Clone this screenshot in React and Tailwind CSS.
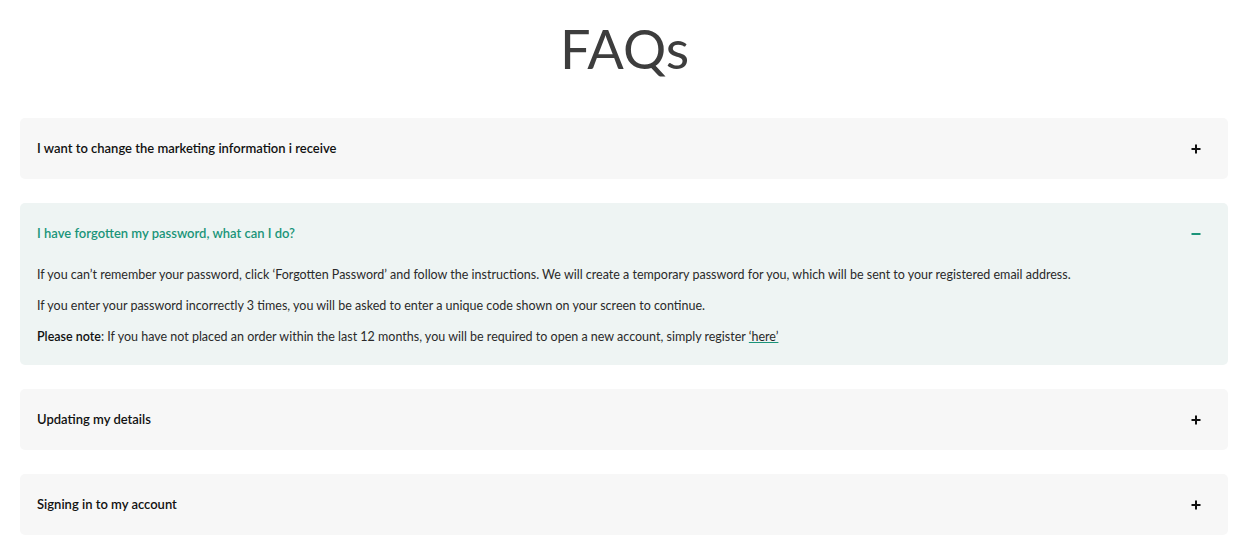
import React, { useState } from 'react';

const faqs = [
  {
    q: 'I want to change the marketing information i receive',
    a: null,
  },
  {
    q: 'I have forgotten my password, what can I do?',
    a: 'password',
  },
  {
    q: 'Updating my details',
    a: null,
  },
  {
    q: 'Signing in to my account',
    a: null,
  },
];

const PlusIcon = () => (
  <svg width="10" height="10" viewBox="0 0 10 10" className="text-[#111]">
    <path d="M5 0.5v9M0.5 5h9" stroke="currentColor" strokeWidth="2" />
  </svg>
);

const MinusIcon = () => (
  <svg width="10" height="10" viewBox="0 0 10 10" className="text-[#1a9479]">
    <path d="M0.5 5h9" stroke="currentColor" strokeWidth="2" />
  </svg>
);

const PasswordAnswer = () => (
  <div className="flex flex-col gap-[13px] text-[12.5px] leading-[18px] text-[#2a2a2a]">
    <p>
      If you can’t remember your password, click ‘Forgotten Password’ and follow the instructions. We will create a
      temporary password for you, which will be sent to your registered email address.
    </p>
    <p>
      If you enter your password incorrectly 3 times, you will be asked to enter a unique code shown on your screen to
      continue.
    </p>
    <p>
      <strong className="font-semibold text-[#111]">Please note</strong>: If you have not placed an order within the
      last 12 months, you will be required to open a new account, simply register{' '}
      <a href="#" className="underline decoration-[#1a9479]">‘here’</a>
    </p>
  </div>
);

const FaqItem = ({ item, open, onToggle }) => (
  <div className={`rounded-[5px] ${open ? 'bg-[#eef4f3]' : 'bg-[#f7f7f7]'}`}>
    <button
      onClick={onToggle}
      className="w-full flex items-center justify-between pl-[17px] pr-[27px] h-[61px] text-left"
    >
      <span className={`text-[13px] font-semibold ${open ? 'text-[#1a9479]' : 'text-[#111]'}`}>{item.q}</span>
      {open ? <MinusIcon /> : <PlusIcon />}
    </button>
    {open && item.a === 'password' && (
      <div className="pl-[17px] pr-[27px] pt-[3px] pb-[19px] -mt-[1px]">
        <PasswordAnswer />
      </div>
    )}
  </div>
);

const App = () => {
  const [openIndex, setOpenIndex] = useState(1);

  return (
    <div className="min-h-screen bg-white px-[20px] pt-[14px]" style={{ fontFamily: 'Lato, "Noto Sans", sans-serif' }}>
      <h1 className="text-center text-[54px] leading-[70px] text-[#3d3d3d] mb-[34px]">FAQs</h1>
      <div className="flex flex-col gap-[24px] w-[1208px]">
        {faqs.map((item, i) => (
          <FaqItem
            key={item.q}
            item={item}
            open={openIndex === i}
            onToggle={() => setOpenIndex(openIndex === i ? -1 : i)}
          />
        ))}
      </div>
    </div>
  );
};

export default App;
